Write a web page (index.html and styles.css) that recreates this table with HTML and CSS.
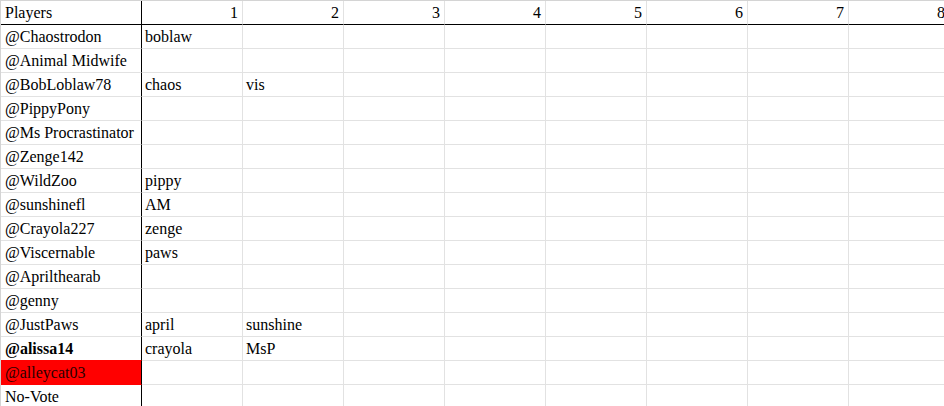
FILE: index.html
```html
<!DOCTYPE html>
<html>
<head>
<meta charset="utf-8">
<link rel="stylesheet" href="styles.css">
</head>
<body>
<div class="sheet">
  <div class="row head"><div class="c name">Players</div><div class="c num">1</div><div class="c num">2</div><div class="c num">3</div><div class="c num">4</div><div class="c num">5</div><div class="c num">6</div><div class="c num">7</div><div class="c num">8</div></div>
  <div class="row"><div class="c name">@Chaostrodon</div><div class="c">boblaw</div><div class="c"></div><div class="c"></div><div class="c"></div><div class="c"></div><div class="c"></div><div class="c"></div><div class="c"></div></div>
  <div class="row"><div class="c name">@Animal Midwife</div><div class="c"></div><div class="c"></div><div class="c"></div><div class="c"></div><div class="c"></div><div class="c"></div><div class="c"></div><div class="c"></div></div>
  <div class="row"><div class="c name">@BobLoblaw78</div><div class="c">chaos</div><div class="c">vis</div><div class="c"></div><div class="c"></div><div class="c"></div><div class="c"></div><div class="c"></div><div class="c"></div></div>
  <div class="row"><div class="c name">@PippyPony</div><div class="c"></div><div class="c"></div><div class="c"></div><div class="c"></div><div class="c"></div><div class="c"></div><div class="c"></div><div class="c"></div></div>
  <div class="row"><div class="c name">@Ms Procrastinator</div><div class="c"></div><div class="c"></div><div class="c"></div><div class="c"></div><div class="c"></div><div class="c"></div><div class="c"></div><div class="c"></div></div>
  <div class="row"><div class="c name">@Zenge142</div><div class="c"></div><div class="c"></div><div class="c"></div><div class="c"></div><div class="c"></div><div class="c"></div><div class="c"></div><div class="c"></div></div>
  <div class="row"><div class="c name">@WildZoo</div><div class="c">pippy</div><div class="c"></div><div class="c"></div><div class="c"></div><div class="c"></div><div class="c"></div><div class="c"></div><div class="c"></div></div>
  <div class="row"><div class="c name">@sunshinefl</div><div class="c">AM</div><div class="c"></div><div class="c"></div><div class="c"></div><div class="c"></div><div class="c"></div><div class="c"></div><div class="c"></div></div>
  <div class="row"><div class="c name">@Crayola227</div><div class="c">zenge</div><div class="c"></div><div class="c"></div><div class="c"></div><div class="c"></div><div class="c"></div><div class="c"></div><div class="c"></div></div>
  <div class="row"><div class="c name">@Viscernable</div><div class="c">paws</div><div class="c"></div><div class="c"></div><div class="c"></div><div class="c"></div><div class="c"></div><div class="c"></div><div class="c"></div></div>
  <div class="row"><div class="c name">@Aprilthearab</div><div class="c"></div><div class="c"></div><div class="c"></div><div class="c"></div><div class="c"></div><div class="c"></div><div class="c"></div><div class="c"></div></div>
  <div class="row"><div class="c name">@genny</div><div class="c"></div><div class="c"></div><div class="c"></div><div class="c"></div><div class="c"></div><div class="c"></div><div class="c"></div><div class="c"></div></div>
  <div class="row"><div class="c name">@JustPaws</div><div class="c">april</div><div class="c">sunshine</div><div class="c"></div><div class="c"></div><div class="c"></div><div class="c"></div><div class="c"></div><div class="c"></div></div>
  <div class="row"><div class="c name bold above-red">@alissa14</div><div class="c">crayola</div><div class="c">MsP</div><div class="c"></div><div class="c"></div><div class="c"></div><div class="c"></div><div class="c"></div><div class="c"></div></div>
  <div class="row"><div class="c name red">@alleycat03</div><div class="c"></div><div class="c"></div><div class="c"></div><div class="c"></div><div class="c"></div><div class="c"></div><div class="c"></div><div class="c"></div></div>
  <div class="row"><div class="c name">No-Vote</div><div class="c"></div><div class="c"></div><div class="c"></div><div class="c"></div><div class="c"></div><div class="c"></div><div class="c"></div><div class="c"></div></div>
</div>
</body>
</html>
```
FILE: styles.css
```css
html, body {
  margin: 0;
  padding: 0;
  overflow: hidden;
  background: #fff;
}
.sheet {
  display: grid;
  width: 950px;
  border-top: 1px solid #d4d4d4;
  border-left: 1px solid #d4d4d4;
  font-family: "Liberation Serif", "Times New Roman", serif;
  font-size: 16px;
  color: #000;
}
.row {
  display: grid;
  grid-template-columns: 141px repeat(8, 101px);
  height: 24px;
}
.c {
  box-sizing: border-box;
  height: 24px;
  line-height: 23px;
  padding: 0 3px;
  border-right: 1px solid #e2e2e2;
  border-bottom: 1px solid #e2e2e2;
  white-space: nowrap;
  overflow: hidden;
}
.c.name {
  padding-left: 4px;
  border-right-color: #000;
}
.head .c {
  border-bottom-color: #000;
}
.c.num {
  text-align: right;
  padding-right: 4px;
}
.bold {
  font-weight: bold;
}
.above-red {
  border-bottom-color: #ff0000;
}
.red {
  background: #ff0000;
  color: #2a0000;
  border-bottom-color: #ff0000;
}
```
